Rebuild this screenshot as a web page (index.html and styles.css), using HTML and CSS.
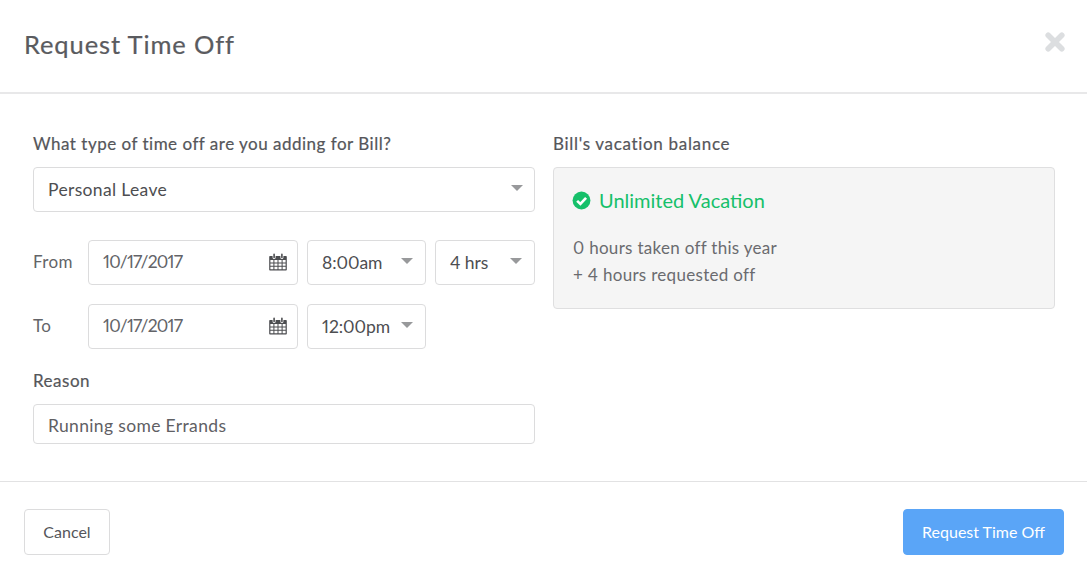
FILE: index.html
```html
<!DOCTYPE html>
<html lang="en">
<head>
<meta charset="utf-8">
<title>Request Time Off</title>
<link rel="stylesheet" href="styles.css">
</head>
<body>
<div class="modal">
  <header class="modal-header">
    <h1 class="modal-title">Request Time Off</h1>
    <svg class="close-icon" viewBox="0 0 20 20" aria-label="Close"><path d="M3.2 3.2 L16.8 16.8 M16.8 3.2 L3.2 16.8" stroke="#dcdee0" stroke-width="5.6" stroke-linecap="round" fill="none"/></svg>
  </header>
  <main class="modal-body">
    <section class="col">
      <div class="label label-first">What type of time off are you adding for Bill?</div>
      <div class="field field-select field-full"><span>Personal Leave</span><i class="caret"></i></div>
      <div class="row row-from">
        <span class="row-label">From</span>
        <div class="field field-date"><span class="date-text">10/17/2017</span>
          <svg class="cal" viewBox="0 0 18 18"><path fill="#4c4d50" fill-rule="evenodd" d="M1 3h2.6v1.6a1.5 1.5 0 0 0 3 0V3h4.8v1.6a1.5 1.5 0 0 0 3 0V3H17a.8.8 0 0 1 .8.8v13a.8.8 0 0 1-.8.8H1a.8.8 0 0 1-.8-.8v-13A.8.8 0 0 1 1 3zM1.4 7v2.4h3V7zm4 0v2.4h3.1V7zm4.1 0v2.4h3.1V7zm4.1 0v2.4h3V7zM1.4 10.4v2.3h3v-2.3zm4 0v2.3h3.1v-2.3zm4.1 0v2.3h3.1v-2.3zm4.1 0v2.3h3v-2.3zM1.4 13.7v2.6h3v-2.6zm4 0v2.6h3.1v-2.6zm4.1 0v2.6h3.1v-2.6zm4.1 0v2.6h3v-2.6z"/><rect x="4.3" y=".6" width="1.6" height="4.6" rx=".8" fill="#4c4d50"/><rect x="12.1" y=".6" width="1.6" height="4.6" rx=".8" fill="#4c4d50"/></svg>
        </div>
        <div class="field field-select field-time"><span>8:00am</span><i class="caret"></i></div>
        <div class="field field-select field-dur"><span>4 hrs</span><i class="caret"></i></div>
      </div>
      <div class="row row-to">
        <span class="row-label">To</span>
        <div class="field field-date"><span class="date-text">10/17/2017</span>
          <svg class="cal" viewBox="0 0 18 18"><path fill="#4c4d50" fill-rule="evenodd" d="M1 3h2.6v1.6a1.5 1.5 0 0 0 3 0V3h4.8v1.6a1.5 1.5 0 0 0 3 0V3H17a.8.8 0 0 1 .8.8v13a.8.8 0 0 1-.8.8H1a.8.8 0 0 1-.8-.8v-13A.8.8 0 0 1 1 3zM1.4 7v2.4h3V7zm4 0v2.4h3.1V7zm4.1 0v2.4h3.1V7zm4.1 0v2.4h3V7zM1.4 10.4v2.3h3v-2.3zm4 0v2.3h3.1v-2.3zm4.1 0v2.3h3.1v-2.3zm4.1 0v2.3h3v-2.3zM1.4 13.7v2.6h3v-2.6zm4 0v2.6h3.1v-2.6zm4.1 0v2.6h3.1v-2.6zm4.1 0v2.6h3v-2.6z"/><rect x="4.3" y=".6" width="1.6" height="4.6" rx=".8" fill="#4c4d50"/><rect x="12.1" y=".6" width="1.6" height="4.6" rx=".8" fill="#4c4d50"/></svg>
        </div>
        <div class="field field-select field-time"><span>12:00pm</span><i class="caret"></i></div>
      </div>
      <div class="label label-reason">Reason</div>
      <div class="field field-input field-full"><span>Running some Errands</span></div>
    </section>
    <section class="col">
      <div class="label label-first label-balance">Bill's vacation balance</div>
      <div class="balance">
        <div class="balance-title">
          <svg class="check" viewBox="0 0 20 20"><circle cx="10" cy="10" r="9.4" fill="#16c06a"/><path d="M5.4 10.4 L8.8 13.6 L14.8 7.2" stroke="#fff" stroke-width="2.8" fill="none"/></svg>
          <span>Unlimited Vacation</span>
        </div>
        <p class="balance-line">0 hours taken off this year</p>
        <p class="balance-line">+ 4 hours requested off</p>
      </div>
    </section>
  </main>
  <footer class="modal-footer">
    <button class="btn btn-cancel" type="button">Cancel</button>
    <button class="btn btn-primary" type="button">Request Time Off</button>
  </footer>
</div>
</body>
</html>
```

FILE: styles.css
```css
* { box-sizing: border-box; }
html, body { margin: 0; padding: 0; background: #fff; }
body { font-family: "Lato", "Liberation Sans", sans-serif; color: #55565a; width: 1087px; height: 576px; overflow: hidden; font-variant-numeric: proportional-nums; }
.modal-header { height: 94px; border-bottom: 2px solid #e8e8e9; display: flex; justify-content: space-between; padding: 29px 22px 0 24px; }
.modal-title { margin: 0; font-size: 25.5px; line-height: 31px; font-weight: 400; letter-spacing: 0.88px; color: #5a5b5f; -webkit-text-stroke: 0.2px #5a5b5f; }
.close-icon { width: 20px; height: 20px; margin-top: 3px; }
.modal-body { display: grid; grid-template-columns: 502px 502px; column-gap: 18px; padding: 0 0 0 33px; height: 388px; border-bottom: 1px solid #e2e2e3; }
.label { font-size: 17px; line-height: 20px; font-weight: 400; letter-spacing: 0.5px; color: #55565a; -webkit-text-stroke: 0.2px #55565a; }
.label-balance { letter-spacing: 0.68px; }
.label-first { margin-top: 40px; margin-bottom: 13px; }
.label-reason { margin-top: 22px; margin-bottom: 13px; }
.field { border: 1px solid #dcdcdd; border-radius: 4px; background: #fff; display: flex; align-items: center; font-size: 17.5px; letter-spacing: 0.35px; color: #4d4e51; position: relative; }
.field-full { width: 502px; padding-left: 14px; }
.field-select { height: 45px; justify-content: space-between; }
.field-select.field-full { padding-right: 11px; }
.field-input { height: 40px; color: #5f6064; padding-top: 2px; }
.caret { display: block; width: 0; height: 0; border-left: 6px solid transparent; border-right: 6px solid transparent; border-top: 6px solid #98999b; margin-top: -4px; flex: none; }
.row { display: flex; align-items: center; gap: 9px; }
.row-from { margin-top: 28px; }
.row-to { margin-top: 19px; }
.row-label { width: 46px; font-size: 17px; letter-spacing: 0.4px; color: #636468; position: relative; top: -1px; }
.field-date { width: 210px; height: 45px; padding: 0 10px 0 14px; justify-content: space-between; color: #636468; letter-spacing: -0.75px; }
.date-text { position: relative; top: -1px; }
.cal { width: 18px; height: 18px; position: relative; top: -1px; flex: none; }
.field-time { width: 119px; padding: 0 12px 0 14px; letter-spacing: -0.05px; }
.field-dur { width: 100px; padding: 0 12px 0 14px; letter-spacing: -0.05px; }
.balance { height: 142px; border: 1px solid #dfdfe0; border-radius: 4px; background: #f5f5f5; padding: 20px 19px; }
.balance-title { display: flex; align-items: center; gap: 8px; font-size: 20px; line-height: 25px; color: #16c06a; margin-bottom: 21px; }
.check { width: 19px; height: 19px; flex: none; margin-left: -1px; }
.balance-line { margin: 0; font-size: 17px; line-height: 27px; letter-spacing: 0.3px; color: #6a6b6f; }
.modal-footer { display: flex; justify-content: space-between; padding: 27px 23px 0 24px; }
.btn { height: 46px; border-radius: 4px; font-family: inherit; font-size: 16px; padding: 0 0 2px; }
.btn-cancel { width: 86px; background: #fff; border: 1px solid #dcdcdd; color: #55565a; }
.btn-primary { width: 161px; background: #5aa5f7; border: 1px solid #5aa5f7; color: #fff; }
```
